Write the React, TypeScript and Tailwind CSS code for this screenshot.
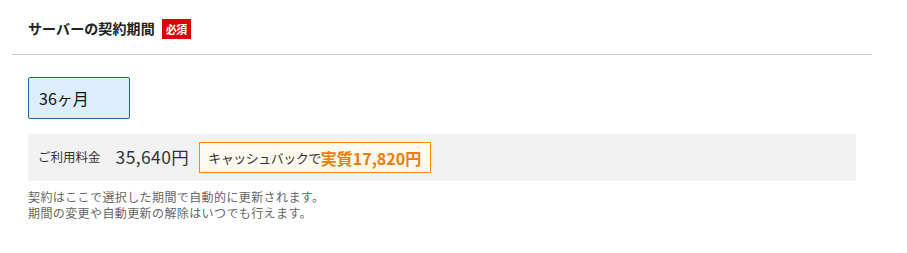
import React from "react";

export default function App() {
  return (
    <div
      className="w-[907px] h-[253px] bg-white text-[#333]"
      style={{ fontFamily: '"Noto Sans CJK JP", "Noto Sans", sans-serif' }}
    >
      <div className="ml-[12px] w-[860px]">
        <div className="h-[55px] border-b border-[#cccccc] pl-[16px] pt-[18px] flex items-start">
          <div className="flex items-center h-[21px] gap-[7px]">
            <span className="text-[14px] font-bold text-[#222] leading-[21px] tracking-[0.1px]">サーバーの契約期間</span>
            <span className="bg-[#dd0000] text-white text-[11px] font-bold leading-[20px] h-[20px] w-[29px] text-center tracking-[-0.5px]">必須</span>
          </div>
        </div>
        <div className="px-[16px] pt-[22px]">
          <button className="w-[102px] h-[42px] rounded-[2px] border border-[#2363a3] bg-[#dcedfd] text-left pl-[10px] text-[16px] text-[#111] leading-none">
            36ヶ月
          </button>
          <div className="mt-[15px] h-[47px] bg-[#f2f2f2] flex items-center pl-[10px]">
            <span className="text-[12.5px] text-[#333]">ご利用料金</span>
            <span className="ml-[15px] text-[17.5px] text-[#333] tracking-[0.4px]">35,640円</span>
            <div className="ml-[10px] h-[31px] border border-[#f08a1c] bg-[#fffaf0] flex items-center pl-[8px] pr-[9px]">
              <span className="text-[13px] text-[#333] tracking-[-0.5px]">キャッシュバックで</span>
              <span className="text-[16px] font-bold text-[#f07c00]">実質17,820円</span>
            </div>
          </div>
          <div className="mt-[8px] text-[12px] leading-[16px] text-[#666] tracking-[0.4px]">
            <p>契約はここで選択した期間で自動的に更新されます。</p>
            <p>期間の変更や自動更新の解除はいつでも行えます。</p>
          </div>
        </div>
      </div>
    </div>
  );
}
